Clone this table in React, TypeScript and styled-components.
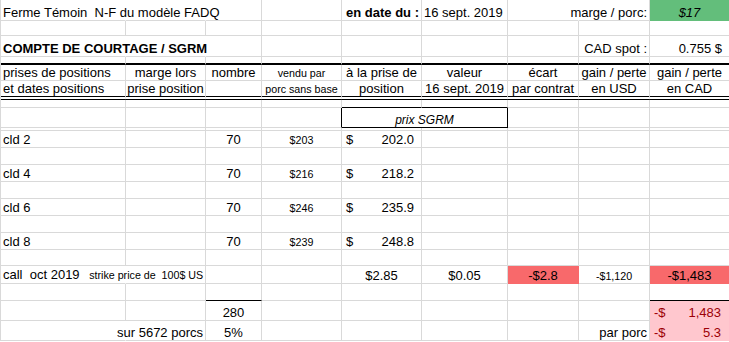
import React from 'react';
import styled, { createGlobalStyle } from 'styled-components';

const GRID = '#d9d9d9';
const GREEN = '#63be7b';
const RED = '#f8696b';
const PINK = '#ffc7ce';
const DARK_RED = '#9c0006';
const COLS = [125, 80, 56, 80, 80, 86, 71, 71, 80];

type Align = 'left' | 'center' | 'right';
type Rule = 'thin' | 'thick' | 'double';

const GlobalStyle = createGlobalStyle`
  * {
    box-sizing: border-box;
  }
  html, body {
    margin: 0;
    padding: 0;
    background: #fff;
    overflow: hidden;
  }
  body {
    font-family: "Liberation Sans", Arial, sans-serif;
    color: #000;
  }
`;

const Sheet = styled.div`
  width: 730px;
  border-left: 1px solid ${GRID};
`;

const Row = styled.div<{ $h: number }>`
  display: grid;
  grid-template-columns: ${COLS.map((c) => `${c}px`).join(' ')};
  height: ${({ $h }) => $h}px;
`;

const Cell = styled.div<{
  $align: Align;
  $bold: boolean;
  $italic: boolean;
  $small: boolean;
  $fill?: string;
  $ink?: string;
  $span: number;
  $pr: number;
  $acc: boolean;
  $right: string;
  $bottom: string;
}>`
  grid-column: span ${({ $span }) => $span};
  display: flex;
  align-items: flex-end;
  justify-content: ${({ $acc, $align }) =>
    $acc ? 'space-between' : $align === 'center' ? 'center' : $align === 'right' ? 'flex-end' : 'flex-start'};
  min-width: 0;
  padding: 0 ${({ $pr }) => $pr}px 0 ${({ $acc }) => ($acc ? 4 : 2)}px;
  white-space: pre;
  font-size: ${({ $small, $italic }) => ($small ? ($italic ? 12 : 10.7) : 13)}px;
  line-height: ${({ $small }) => ($small ? 13 : 15)}px;
  font-weight: ${({ $bold }) => ($bold ? 700 : 400)};
  font-style: ${({ $italic }) => ($italic ? 'italic' : 'normal')};
  color: ${({ $ink }) => $ink ?? '#000'};
  background: ${({ $fill }) => $fill ?? 'transparent'};
  border-right: ${({ $right }) => $right};
  border-bottom: ${({ $bottom }) => $bottom};
`;

const Note = styled.span`
  font-size: 10.7px;
`;

type CellDef = {
  v?: React.ReactNode;
  al?: Align;
  b?: boolean;
  i?: boolean;
  sm?: boolean;
  fill?: string;
  ink?: string;
  open?: boolean;
  span?: number;
  edge?: boolean;
  under?: boolean;
  acc?: [string, string];
  pr?: number;
};

type RowDef = { h: number; rule?: Rule; cells?: CellDef[] };

const blank = (n: number): CellDef[] => Array.from({ length: n }, () => ({}));

const position = (name: string, sold: string, price: string): RowDef => ({
  h: 17,
  cells: [
    { v: name },
    {},
    { v: '70', al: 'center' },
    { v: sold, al: 'center', sm: true },
    { acc: ['$', price], pr: 7 },
    ...blank(4),
  ],
});

const spacer = (h: number): RowDef => ({ h });

const rows: RowDef[] = [
  {
    h: 21,
    cells: [
      { v: 'Ferme Témoin  N-F du modèle FADQ', open: true },
      { open: true },
      {},
      {},
      { v: 'en date du :', b: true, al: 'right' },
      { v: '16 sept. 2019' },
      { open: true },
      { v: 'marge / porc:', al: 'right' },
      { v: '$17', i: true, al: 'center', fill: GREEN },
    ],
  },
  spacer(15),
  {
    h: 21,
    cells: [
      { v: 'COMPTE DE COURTAGE / SGRM', b: true, open: true },
      { open: true },
      ...blank(5),
      { v: 'CAD spot :', al: 'right' },
      { v: '0.755 $', al: 'right', pr: 7 },
    ],
  },
  { h: 8, rule: 'thick' },
  {
    h: 16,
    cells: [
      { v: 'prises de positions' },
      { v: 'marge lors', al: 'center' },
      { v: 'nombre', al: 'center' },
      { v: 'vendu par', al: 'center', sm: true },
      { v: 'à la prise de', al: 'center' },
      { v: 'valeur', al: 'center' },
      { v: 'écart', al: 'center' },
      { v: 'gain / perte', al: 'center' },
      { v: 'gain / perte', al: 'center' },
    ],
  },
  {
    h: 19,
    rule: 'double',
    cells: [
      { v: 'et dates positions' },
      { v: 'prise position', al: 'center' },
      {},
      { v: 'porc sans base', al: 'center', sm: true },
      { v: 'position', al: 'center' },
      { v: '16 sept. 2019', al: 'center' },
      { v: 'par contrat', al: 'center' },
      { v: 'en USD', al: 'center' },
      { v: 'en CAD', al: 'center' },
    ],
  },
  { h: 8, cells: [...blank(4), { under: true }, { under: true }, ...blank(3)] },
  {
    h: 20,
    cells: [
      ...blank(3),
      { edge: true },
      { v: 'prix SGRM', i: true, al: 'center', span: 2, edge: true, under: true, sm: true },
      ...blank(3),
    ],
  },
  spacer(3),
  position('cld 2', '$203', '202.0'),
  spacer(17),
  position('cld 4', '$216', '218.2'),
  spacer(17),
  position('cld 6', '$246', '235.9'),
  spacer(17),
  position('cld 8', '$239', '248.8'),
  spacer(16),
  {
    h: 18,
    cells: [
      {
        v: (
          <>
            call  oct 2019 <Note>  strike price de  100$ US</Note>
          </>
        ),
        open: true,
      },
      ...blank(3),
      { v: '$2.85', al: 'center' },
      { v: '$0.05', al: 'center' },
      { v: '-$2.8', al: 'center', fill: RED },
      { v: '-$1,120', al: 'center', sm: true },
      { v: '-$1,483', al: 'center', fill: RED },
    ],
  },
  { h: 17, cells: [{}, {}, { under: true }, ...blank(5), { under: true }] },
  {
    h: 20,
    cells: [
      {},
      {},
      { v: '280', al: 'center' },
      ...blank(5),
      { acc: ['-$', '1,483'], fill: PINK, ink: DARK_RED, pr: 8 },
    ],
  },
  {
    h: 20,
    cells: [
      { open: true },
      { v: 'sur 5672 porcs', al: 'right' },
      { v: '5%', al: 'center' },
      ...blank(4),
      { v: 'par porc', al: 'right' },
      { acc: ['-$', '5.3'], fill: PINK, ink: DARK_RED, pr: 8 },
    ],
  },
];

const bottomRule = (rule: Rule | undefined, under?: boolean, fill?: string) => {
  if (rule === 'thick') return '2px solid #000';
  if (rule === 'double') return '4px double #000';
  if (under) return '1px solid #000';
  return `1px solid ${fill ? 'transparent' : GRID}`;
};

const App = () => {
  return (
    <>
      <GlobalStyle />
      <Sheet>
        {rows.map((row, r) => {
          const cells = row.cells ?? blank(9);
          return (
            <Row key={r} $h={row.h}>
              {cells.map((c, k) => (
                <Cell
                  key={k}
                  $align={c.al ?? 'left'}
                  $bold={!!c.b}
                  $italic={!!c.i}
                  $small={!!c.sm}
                  $fill={c.fill}
                  $ink={c.ink}
                  $span={c.span ?? 1}
                  $pr={c.pr ?? 2}
                  $acc={!!c.acc}
                  $right={c.edge ? '1px solid #000' : `1px solid ${c.open || c.fill ? 'transparent' : GRID}`}
                  $bottom={bottomRule(row.rule, c.under, c.fill)}
                >
                  {c.acc ? (
                    <>
                      <span>{c.acc[0]}</span>
                      <span>{c.acc[1]}</span>
                    </>
                  ) : (
                    c.v !== undefined && <span>{c.v}</span>
                  )}
                </Cell>
              ))}
            </Row>
          );
        })}
      </Sheet>
    </>
  );
};

export default App;
